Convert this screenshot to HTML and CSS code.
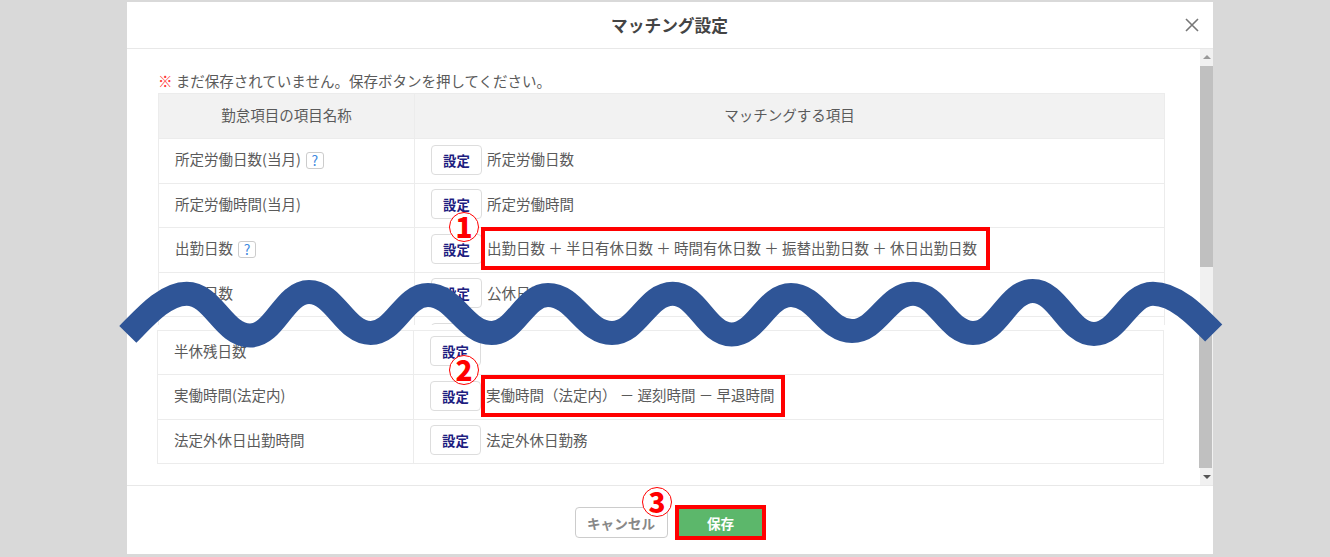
FILE: index.html
```html
<!DOCTYPE html>
<html lang="ja">
<head>
<meta charset="utf-8">
<title>マッチング設定</title>
<link rel="stylesheet" href="styles.css">
</head>
<body>
<div class="page">
  <div class="modal">
    <header class="modal-head">
      <span></span>
      <h1 class="modal-title">マッチング設定</h1>
      <svg class="close" width="14" height="14" viewBox="0 0 14 14"><path d="M1 1L13 13M13 1L1 13" fill="none" stroke="#777" stroke-width="1.6"/></svg>
    </header>
    <div class="modal-body">
      <div class="content">
        <p class="note"><span class="mark">※</span> まだ保存されていません。保存ボタンを押してください。</p>
        <div class="sheet sheet-upper">
          <div class="row row-head"><div class="cell-name cell-center">勤怠項目の項目名称</div><div class="cell-val cell-center">マッチングする項目</div></div>
          <div class="row"><div class="cell-name">所定労働日数(当月)<span class="help">?</span></div><div class="cell-val"><button class="set">設定</button><span>所定労働日数</span></div></div>
          <div class="row"><div class="cell-name">所定労働時間(当月)</div><div class="cell-val"><button class="set">設定</button><span>所定労働時間</span></div></div>
          <div class="row"><div class="cell-name">出勤日数<span class="help">?</span></div><div class="cell-val"><button class="set">設定</button><span class="val-long">出勤日数 ＋ 半日有休日数 ＋ 時間有休日数 ＋ 振替出勤日数 ＋ 休日出勤日数</span></div></div>
          <div class="row"><div class="cell-name">公休日数</div><div class="cell-val"><button class="set">設定</button><span>公休日数</span></div></div>
          <div class="row"><div class="cell-name"></div><div class="cell-val"><button class="set">設定</button></div></div>
        </div>
        <div class="sheet sheet-lower">
          <div class="row"><div class="cell-name">半休残日数</div><div class="cell-val"><button class="set">設定</button></div></div>
          <div class="row"><div class="cell-name">実働時間(法定内)</div><div class="cell-val"><button class="set">設定</button><span>実働時間（法定内） － 遅刻時間 － 早退時間</span></div></div>
          <div class="row"><div class="cell-name">法定外休日出勤時間</div><div class="cell-val"><button class="set">設定</button><span>法定外休日勤務</span></div></div>
        </div>
      </div>
      <div class="scrollbar">
        <div class="arrow arrow-up"></div>
        <div class="thumb thumb-a"></div>
        <div class="track"></div>
        <div class="thumb thumb-b"></div>
        <div class="arrow arrow-down"></div>
      </div>
    </div>
    <footer class="modal-foot">
      <button class="btn btn-cancel">キャンセル</button>
      <button class="btn btn-save">保存</button>
    </footer>
  </div>

  <svg class="wave" width="1330" height="557" viewBox="0 0 1330 557"><path d="M127.8 334.4C145 317 165 293.7 186.7 293.7C213.3 293.7 223.4 335.5 250 335.5C274.8 335.5 284.2 292 309 292C334.9 292 344.8 333 370.7 333C394.7 333 404 295 428 295C454.8 295 464.9 333 491.7 333C515.3 333 524.4 295 548 295C574.9 295 585.1 333 612 333C637.5 333 647.2 293.7 672.7 293.7C697.5 293.7 706.9 334.5 731.7 334.5C756.6 334.5 766.1 295 791 295C816.6 295 826.4 331 852 331C877.6 331 887.4 293.7 913 293.7C938.2 293.7 947.8 333 973 333C998 333 1007.7 291 1032.7 291C1058.4 291 1068.3 334 1094 334C1118.8 334 1128.2 293.7 1153 293.7C1175 293.7 1195 314 1213.7 333" fill="none" stroke="#2f5597" stroke-width="24"/></svg>
  <div class="redbox redbox-1"></div>
  <div class="redbox redbox-2"></div>
  <div class="redbox redbox-3"></div>
  <div class="num num-1">1</div>
  <div class="num num-2">2</div>
  <div class="num num-3">3</div>
</div>
</body>
</html>
```
FILE: styles.css
```css
* { box-sizing: border-box; }
html, body { margin: 0; padding: 0; }
body {
  background: #d9d9d9;
  font-family: "Noto Sans CJK JP", "Noto Sans", sans-serif;
  color: #5a5a5a;
  font-size: 14.5px;
}
.page {
  position: relative;
  width: 1330px;
  height: 557px;
  padding: 2px 0 3px 127px;
  overflow: hidden;
}
.modal {
  width: 1086px;
  height: 552px;
  background: #fff;
  display: flex;
  flex-direction: column;
}
.modal-head {
  flex: 0 0 47px;
  display: grid;
  grid-template-columns: 1fr auto 1fr;
  align-items: center;
  border-bottom: 1px solid #e8e8e8;
}
.modal-title {
  margin: 0;
  font-size: 16.7px;
  font-weight: 700;
  color: #444;
  line-height: 1;
  transform: translateX(-0.5px);
}
.close { justify-self: end; margin-right: 14px; }
.modal-body { flex: 0 0 436px; display: flex; overflow: hidden; }
.content { flex: 1; padding: 22px 0 0 31px; min-width: 0; }
.note {
  margin: 0;
  height: 22px;
  line-height: 20px;
  font-size: 14.5px;
  white-space: nowrap;
}
.mark { color: #f33; }
.sheet { width: 1007px; }
.sheet-upper {
  height: 232px;
  overflow: hidden;
  border-left: 1px solid #ececec;
  border-right: 1px solid #ececec;
  border-top: 1px solid #ececec;
}
.sheet-lower {
  margin-top: 4.5px;
  margin-left: -1px;
  border-left: 1px solid #ececec;
  border-right: 1px solid #ececec;
  border-top: 1px solid #ececec;
}
.row {
  display: grid;
  grid-template-columns: 256px 1fr;
  height: 44.5px;
  border-bottom: 1px solid #ececec;
}
.row-head { background: #f2f2f2; height: 45px; }
.cell-name {
  display: flex;
  align-items: center;
  padding: 0 0 4px 16px;
  border-right: 1px solid #ececec;
  white-space: nowrap;
}
.cell-val {
  display: flex;
  align-items: center;
  gap: 5px;
  padding: 0 0 4px 16px;
  white-space: nowrap;
}
.cell-center { justify-content: center; padding-left: 0; }
.set {
  width: 51px;
  height: 30px;
  margin-top: 2px;
  padding: 0;
  background: #fff;
  border: 1px solid #ddd;
  border-radius: 4px;
  color: #1d1d80;
  font: 700 13.4px "Noto Sans CJK JP", sans-serif;
}
.help {
  display: inline-flex;
  justify-content: center;
  align-items: center;
  width: 18px;
  height: 17px;
  margin: 3px 0 0 5px;
  border: 1px solid #ccc;
  border-radius: 3px;
  color: #3f8ae0;
  font-size: 14px;
  line-height: 1;
}
.scrollbar {
  flex: 0 0 13px;
  display: flex;
  flex-direction: column;
  background: #f1f1f1;
}
.arrow { flex: 0 0 17px; position: relative; }
.arrow-up::after, .arrow-down::after {
  content: "";
  position: absolute;
  left: 3px;
  border-left: 4px solid transparent;
  border-right: 4px solid transparent;
}
.arrow-up::after { top: 6px; border-bottom: 4px solid #999; }
.arrow-down::after { top: 7px; border-top: 4px solid #555; }
.thumb { background: #c0c0c0; }
.thumb-a { flex: 0 0 201px; }
.track { flex: 0 0 67px; }
.thumb-b { flex: 0 0 134px; margin-right: 1px; margin-left: -1px; }
.modal-foot {
  flex: 1;
  display: flex;
  justify-content: center;
  align-items: flex-start;
  gap: 8px;
  padding-top: 21px;
  border-top: 1px solid #e8e8e8;
}
.btn {
  height: 31px;
  padding: 0;
  border-radius: 4px;
  font: 700 13.6px "Noto Sans CJK JP", sans-serif;
}
.btn-cancel { width: 93px; background: #fff; border: 1px solid #ccc; color: #888; }
.btn-save { width: 90px; background: #5cb76b; border: 0; color: #fff; }

.wave { position: absolute; left: 0; top: 0; pointer-events: none; }
.redbox { position: absolute; border: 4px solid #f00; }
.redbox-1 { left: 481px; top: 227px; width: 509px; height: 43px; }
.redbox-2 { left: 481px; top: 375px; width: 304px; height: 42px; }
.redbox-3 { left: 675px; top: 505px; width: 91px; height: 35px; }
.num {
  position: absolute;
  width: 30px;
  height: 30px;
  border: 1px solid #f00;
  border-radius: 50%;
  background: #fff;
  color: #f00;
  font-size: 28px;
  font-weight: 900;
  line-height: 27px;
  text-align: center;
}
.num-1 { left: 449px; top: 212px; }
.num-2 { left: 449px; top: 355px; }
.num-3 { left: 642px; top: 487px; }
```
